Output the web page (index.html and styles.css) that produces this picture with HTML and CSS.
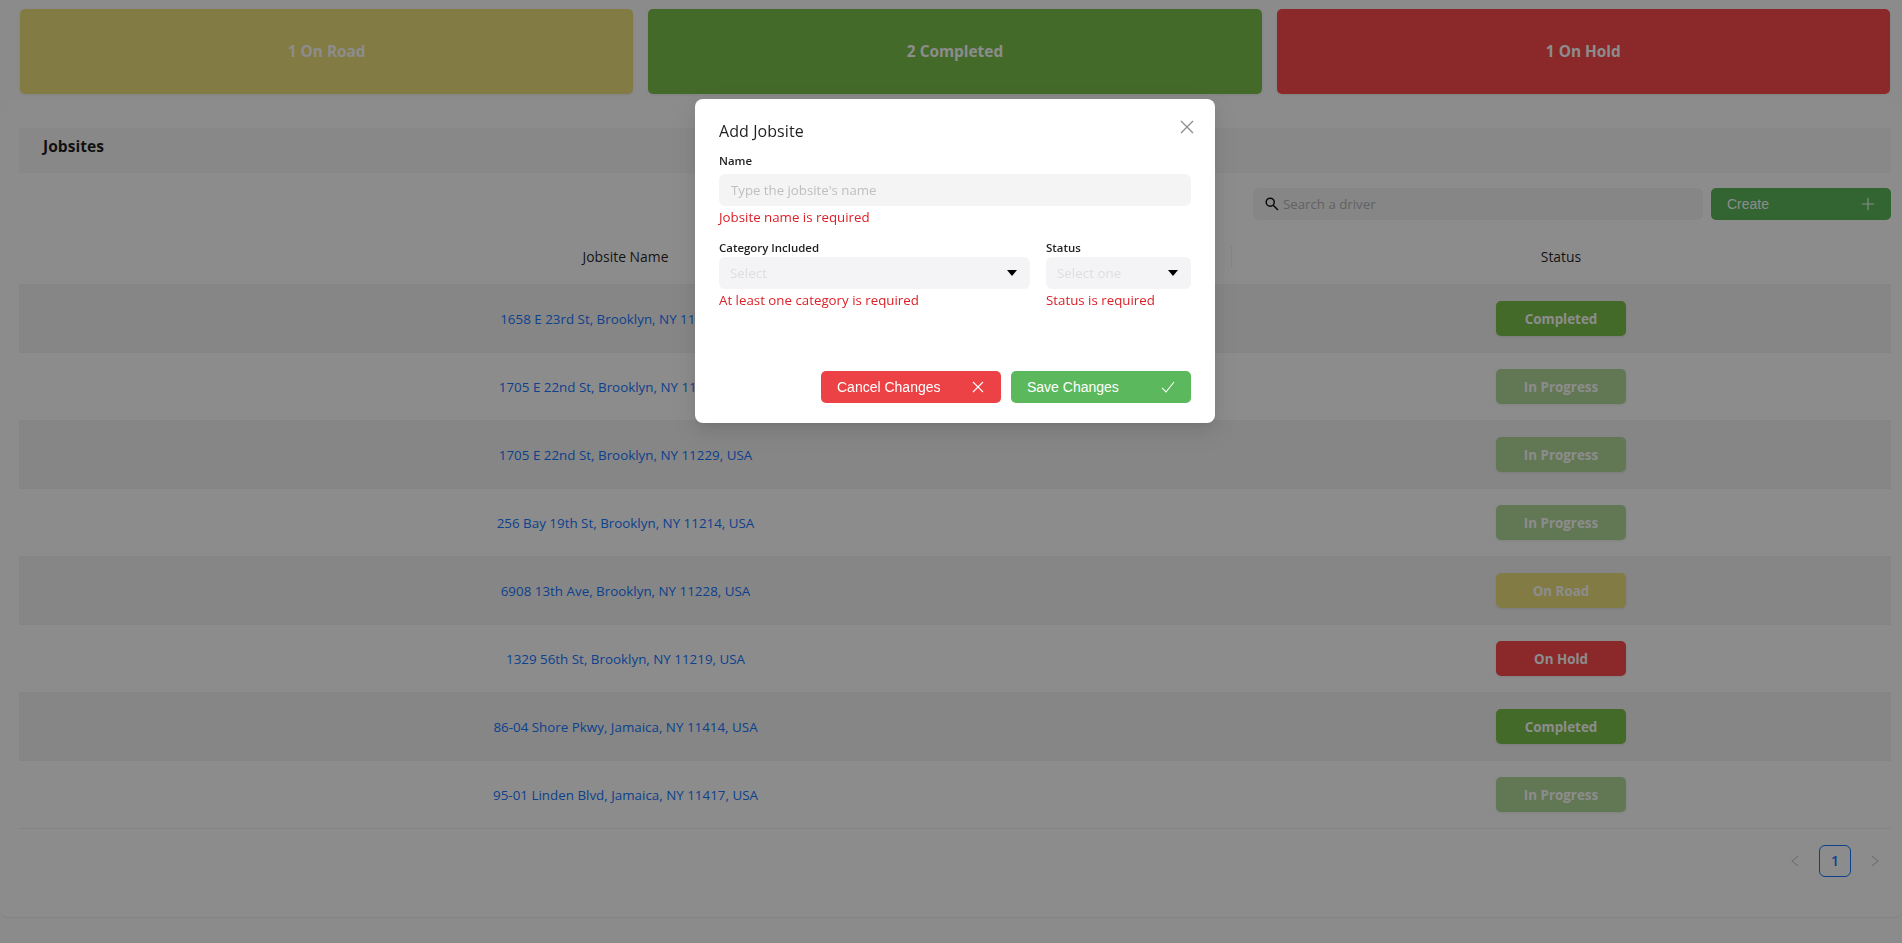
FILE: index.html
```html
<!DOCTYPE html>
<html lang="en">
<head>
<meta charset="utf-8">
<title>Jobsites</title>
<link rel="stylesheet" href="styles.css">
</head>
<body>
<main class="page">
  <section class="summary">
    <div class="summary-card road">1 On Road</div>
    <div class="summary-card completed">2 Completed</div>
    <div class="summary-card hold">1 On Hold</div>
  </section>
  <section class="panel">
    <h2 class="panel-title">Jobsites</h2>
    <div class="toolbar">
      <div class="search">
        <svg class="icon-search" viewBox="0 0 14 14"><circle cx="5.2" cy="5.2" r="4"/><path d="M8.2 8.2 13 13"/></svg>
        <span>Search a driver</span>
      </div>
      <button class="btn green"><span>Create</span><svg class="icon" viewBox="0 0 14 14"><path d="M7 .8v12.4M.8 7h12.4"/></svg></button>
    </div>
    <div class="table">
      <div class="row head"><div class="cell name">Jobsite Name</div><div class="cell status">Status</div></div>
      <div class="row odd"><a class="cell name">1658 E 23rd St, Brooklyn, NY 11229, USA</a><div class="cell status"><span class="tag completed">Completed</span></div></div>
      <div class="row"><a class="cell name">1705 E 22nd St, Brooklyn, NY 11229, USA</a><div class="cell status"><span class="tag progress">In Progress</span></div></div>
      <div class="row odd"><a class="cell name">1705 E 22nd St, Brooklyn, NY 11229, USA</a><div class="cell status"><span class="tag progress">In Progress</span></div></div>
      <div class="row"><a class="cell name">256 Bay 19th St, Brooklyn, NY 11214, USA</a><div class="cell status"><span class="tag progress">In Progress</span></div></div>
      <div class="row odd"><a class="cell name">6908 13th Ave, Brooklyn, NY 11228, USA</a><div class="cell status"><span class="tag road">On Road</span></div></div>
      <div class="row"><a class="cell name">1329 56th St, Brooklyn, NY 11219, USA</a><div class="cell status"><span class="tag hold">On Hold</span></div></div>
      <div class="row odd"><a class="cell name">86-04 Shore Pkwy, Jamaica, NY 11414, USA</a><div class="cell status"><span class="tag completed">Completed</span></div></div>
      <div class="row"><a class="cell name">95-01 Linden Blvd, Jamaica, NY 11417, USA</a><div class="cell status"><span class="tag progress">In Progress</span></div></div>
    </div>
    <nav class="pagination">
      <span class="page-arrow"><svg viewBox="0 0 12 12"><path d="M9 1.2 2.8 6 9 10.8"/></svg></span>
      <span class="page-number">1</span>
      <span class="page-arrow"><svg viewBox="0 0 12 12"><path d="M3 1.2 9.2 6 3 10.8"/></svg></span>
    </nav>
  </section>
</main>
<div class="mask">
  <div class="modal">
    <div class="modal-head"><h3 class="modal-title">Add Jobsite</h3><svg class="icon-close" viewBox="0 0 14 14"><path d="M1 1l12 12M13 1 1 13"/></svg></div>
    <div class="field">
      <label class="label">Name</label>
      <div class="input">Type the jobsite's name</div>
      <p class="error">Jobsite name is required</p>
    </div>
    <div class="field-row">
      <div class="field category">
        <label class="label low">Category Included</label>
        <div class="select"><span>Select</span><i class="caret"></i></div>
        <p class="error">At least one category is required</p>
      </div>
      <div class="field state">
        <label class="label low">Status</label>
        <div class="select"><span>Select one</span><i class="caret"></i></div>
        <p class="error">Status is required</p>
      </div>
    </div>
    <div class="actions">
      <button class="btn red"><span>Cancel Changes</span><svg class="icon" viewBox="0 0 14 14"><path d="M2 2l10 10M12 2 2 12"/></svg></button>
      <button class="btn green"><span>Save Changes</span><svg class="icon" viewBox="0 0 14 14"><path d="M1 7.8 5 12 13 2"/></svg></button>
    </div>
  </div>
</div>
</body>
</html>
```
FILE: styles.css
```css
* { box-sizing: border-box; }
body { margin: 0; height: 943px; overflow: hidden; background: #fdfdfd; color: rgba(0,0,0,.88); font: 14px/22px "Open Sans", "Noto Sans", sans-serif; }
h2, h3, p { margin: 0; }
.summary { display: flex; gap: 15px; padding: 9px 12px 8px 20px; }
.summary-card { flex: 1; height: 85px; display: flex; align-items: center; justify-content: center; padding-top: 1px; border-radius: 5px; color: #fff; font-size: 15.4px; font-weight: 700; box-shadow: 0 1px 3px rgba(0,0,0,.08); }
.road { background: #eee07d; }
.completed { background: #7bc14b; }
.hold { background: #fe494b; }
.progress { background: #b2da9b; }
.panel { height: 815px; padding: 26px 11px 0 19px; background: #fff; border-radius: 8px; box-shadow: 0 1px 2px rgba(0,0,0,.06); }
.panel-title { height: 45px; padding: 7px 24px; background: #f7f7f7; font-size: 15.6px; font-weight: 700; line-height: 22px; }
.toolbar { display: flex; justify-content: flex-end; gap: 8px; padding-top: 15px; }
.search { width: 450px; height: 32px; display: flex; align-items: center; gap: 4px; padding: 0 12px; border-radius: 6px; background: #f5f5f5; color: #b2b2b2; font-size: 13.25px; }
.icon-search { width: 14px; height: 14px; fill: none; stroke: #111; stroke-width: 1.5; }
.btn { width: 180px; height: 32px; display: flex; align-items: center; justify-content: space-between; padding: 0 16px; border: 0; border-radius: 5px; color: #fff; font: 14px "Liberation Sans", Arial, sans-serif; }
.green { background: #5cb85c; }
.red { background: #ed4245; }
.icon { width: 14px; height: 14px; fill: none; stroke: #fff; stroke-width: 1.1; }
.table { padding-top: 10px; }
.row { display: flex; height: 68px; border-bottom: 1px solid #f2f2f2; background: #fff; font-size: 13.38px; }
.row.head { height: 55px; font-size: 13.9px; font-weight: 500; }
.row.odd { background: #f4f4f4; }
.cell { display: flex; align-items: center; justify-content: center; }
.name { flex: 0 0 1212px; padding-left: 1px; color: #1677ff; }
.status { flex: 1; }
.head .name { color: inherit; }
.head .status { position: relative; }
.head .status::before { content: ""; position: absolute; left: 0; top: 16px; height: 22px; width: 1px; background: #f0f0f0; }
.tag { width: 130px; height: 35px; display: flex; align-items: center; justify-content: center; padding-top: 1px; border-radius: 5px; color: #fff; font-weight: 700; box-shadow: 0 1px 3px rgba(0,0,0,.08); }
.pagination { display: flex; justify-content: flex-end; gap: 8px; padding-top: 16px; }
.page-arrow, .page-number { width: 32px; height: 32px; display: flex; align-items: center; justify-content: center; border-radius: 6px; }
.page-number { border: 1px solid #1677ff; color: #1677ff; font-weight: 600; }
.page-arrow svg { width: 12px; height: 12px; fill: none; stroke: #bfbfbf; stroke-width: 1; }
.mask { position: fixed; inset: 0; padding-top: 99px; background: rgba(0,0,0,.45); }
.modal { width: 520px; height: 324px; margin-left: 695px; padding: 20px 24px; border-radius: 8px; background: #fff; box-shadow: 0 6px 16px rgba(0,0,0,.08), 0 3px 6px -4px rgba(0,0,0,.12), 0 9px 28px 8px rgba(0,0,0,.05); }
.modal-head { display: flex; justify-content: space-between; height: 32px; }
.modal-title { font-size: 16px; font-weight: 500; line-height: 24px; letter-spacing: .08px; }
.icon-close { width: 14px; height: 14px; margin: 1px -3px 0 0; fill: none; stroke: #8c8c8c; stroke-width: 1.3; }
.label { display: block; height: 20px; font-size: 11.45px; font-weight: 600; line-height: 20px; }
.label.low { line-height: 22px; }
.input, .select { height: 32px; display: flex; align-items: center; border-radius: 6px; }
.input { margin-top: 3px; padding: 0 12px; background: #f4f4f4; color: #bfbfbf; font-size: 13.22px; }
.error { height: 22px; line-height: 22px; color: #dc1f26; font-size: 13.3px; }
.field-row { display: flex; gap: 16px; padding-top: 9px; }
.category { width: 311px; }
.state { flex: 1; }
.select { justify-content: space-between; padding: 0 13px 0 11px; background: #f4f4f6; color: #dedede; font-size: 13.4px; }
.caret { width: 10px; height: 6px; background: #000; clip-path: polygon(0 0, 100% 0, 50% 100%); }
.actions { display: flex; justify-content: flex-end; gap: 10px; padding-top: 60px; }
```
